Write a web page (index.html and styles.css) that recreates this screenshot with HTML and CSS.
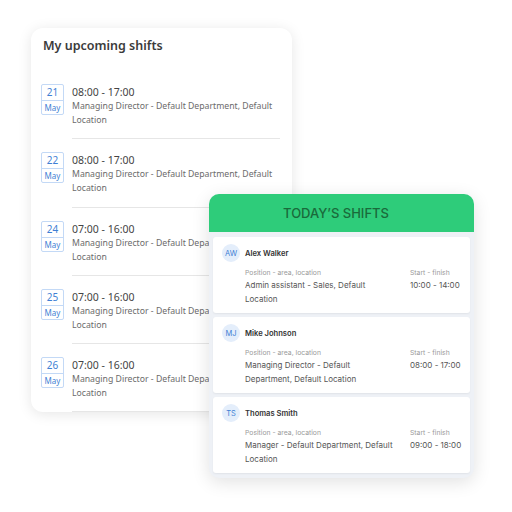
FILE: index.html
```html
<!DOCTYPE html>
<html lang="en">
  <head>
    <meta charset="UTF-8" />
    <meta name="viewport" content="width=device-width, initial-scale=1.0" />
    <title>Shifts</title>
    <link rel="stylesheet" href="styles.css">
  </head>
  <body>
    <div class="stage">
      <div class="upcoming">
        <h2>My upcoming shifts</h2>

        <div class="shift">
          <div class="date"><span class="day">21</span><span class="month">May</span></div>
          <div class="info">
            <div class="time">08:00 - 17:00</div>
            <div class="desc">Managing Director - Default Department, Default Location</div>
          </div>
        </div>

        <div class="shift">
          <div class="date"><span class="day">22</span><span class="month">May</span></div>
          <div class="info">
            <div class="time">08:00 - 17:00</div>
            <div class="desc">Managing Director - Default Department, Default Location</div>
          </div>
        </div>

        <div class="shift">
          <div class="date"><span class="day">24</span><span class="month">May</span></div>
          <div class="info">
            <div class="time">07:00 - 16:00</div>
            <div class="desc">Managing Director - Default Department, Default Location</div>
          </div>
        </div>

        <div class="shift">
          <div class="date"><span class="day">25</span><span class="month">May</span></div>
          <div class="info">
            <div class="time">07:00 - 16:00</div>
            <div class="desc">Managing Director - Default Department, Default Location</div>
          </div>
        </div>

        <div class="shift">
          <div class="date"><span class="day">26</span><span class="month">May</span></div>
          <div class="info">
            <div class="time">07:00 - 16:00</div>
            <div class="desc">Managing Director - Default Department, Default Location</div>
          </div>
        </div>
      </div>

      <div class="today">
        <div class="today-header">TODAY’S SHIFTS</div>
        <div class="today-body">
          <div class="person">
            <div class="person-head">
              <span class="avatar">AW</span>
              <span class="name">Alex Walker</span>
            </div>
            <div class="details">
              <div class="col-pos">
                <div class="label">Position - area, location</div>
                <div class="value">Admin assistant - Sales, Default Location</div>
              </div>
              <div class="col-time">
                <div class="label">Start - finish</div>
                <div class="value">10:00 - 14:00</div>
              </div>
            </div>
          </div>

          <div class="person">
            <div class="person-head">
              <span class="avatar">MJ</span>
              <span class="name">Mike Johnson</span>
            </div>
            <div class="details">
              <div class="col-pos">
                <div class="label">Position - area, location</div>
                <div class="value">Managing Director - Default Department, Default Location</div>
              </div>
              <div class="col-time">
                <div class="label">Start - finish</div>
                <div class="value">08:00 - 17:00</div>
              </div>
            </div>
          </div>

          <div class="person">
            <div class="person-head">
              <span class="avatar">TS</span>
              <span class="name">Thomas Smith</span>
            </div>
            <div class="details">
              <div class="col-pos">
                <div class="label">Position - area, location</div>
                <div class="value">Manager - Default Department, Default Location</div>
              </div>
              <div class="col-time">
                <div class="label">Start - finish</div>
                <div class="value">09:00 - 18:00</div>
              </div>
            </div>
          </div>
        </div>
      </div>
    </div>
  </body>
</html>
```

FILE: styles.css
```css
:root {
  --blue: #3f7fd4;
  --blue-border: #c3d9f6;
  --green: #2ecc7a;
  --green-text: #1a6a3a;
  --text: #3b3b3b;
  --muted: #6b6b6b;
  --panel: #eef1f6;
}

* {
  margin: 0;
  padding: 0;
  box-sizing: border-box;
}

body {
  background: #fff;
  width: 512px;
  height: 512px;
  overflow: hidden;
  font-family: "Noto Sans", "Open Sans", sans-serif;
}

.stage {
  position: relative;
  padding: 28px 0 0 31px;
}

/* left card */
.upcoming {
  width: 261px;
  height: 384px;
  background: #fff;
  border-radius: 12px;
  box-shadow: 0 2px 14px rgba(0, 0, 0, 0.1);
  padding: 9px 12px 0 10px;
  overflow: hidden;
}

.upcoming h2 {
  font-size: 12.5px;
  line-height: 18px;
  font-weight: 600;
  color: var(--text);
  padding-left: 2px;
  margin-bottom: 16px;
}

.shift {
  display: flex;
  gap: 8px;
}

.date {
  width: 23px;
  margin-top: 13px;
  display: flex;
  flex-direction: column;
  border: 1px solid var(--blue-border);
  border-radius: 2px;
  color: var(--blue);
  text-align: center;
  height: 31px;
}

.day {
  font-size: 10px;
  line-height: 15px;
  border-bottom: 1px solid var(--blue-border);
}

.month {
  font-size: 8px;
  line-height: 14px;
}

.info {
  flex: 1;
  padding: 14px 0 11.25px;
  border-bottom: 1px solid #e6e6e6;
}

.time {
  font-size: 10.5px;
  line-height: 14px;
  color: #444;
}

.desc {
  font-size: 8.7px;
  line-height: 14px;
  color: var(--muted);
}

/* right card, overlapping */
.today {
  position: absolute;
  left: 209px;
  top: 194px;
  width: 265px;
  border-radius: 10px;
  overflow: hidden;
  background: var(--panel);
  box-shadow: 0 4px 18px rgba(0, 0, 0, 0.12);
  font-family: Inter, "Noto Sans", sans-serif;
}

.today-header {
  background: var(--green);
  color: var(--green-text);
  height: 38px;
  line-height: 38px;
  text-align: center;
  font-size: 13px;
  font-weight: 500;
  padding-right: 11px;
}

.today-body {
  padding: 5px 4px 5px;
  display: flex;
  flex-direction: column;
  gap: 4px;
}

.person {
  background: #fff;
  border-radius: 3px;
  box-shadow: 0 1px 2px rgba(0, 0, 0, 0.06);
  padding: 7px 8px 7px 9px;
}

.person-head {
  display: flex;
  align-items: center;
  gap: 5px;
  height: 18px;
}

.avatar {
  width: 18px;
  height: 18px;
  border-radius: 50%;
  background: #e4eefb;
  color: var(--blue);
  font-size: 7.5px;
  display: flex;
  align-items: center;
  justify-content: center;
}

.name {
  font-size: 7.6px;
  font-weight: 600;
  color: #333;
}

.details {
  display: flex;
  gap: 15px;
  padding-left: 23px;
  margin-top: 6px;
}

.col-pos {
  width: 150px;
}

.label {
  font-size: 6.8px;
  line-height: 10px;
  color: #9a9a9a;
}

.value {
  font-size: 8px;
  line-height: 14px;
  color: #555;
}
```
